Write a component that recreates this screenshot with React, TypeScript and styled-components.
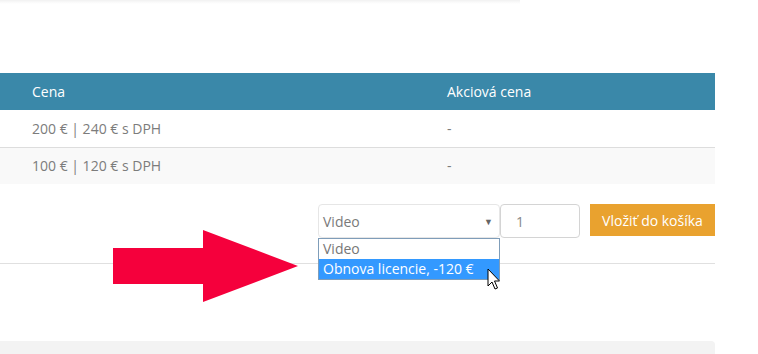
import React from "react"
import styled, { createGlobalStyle } from "styled-components"

const Global = createGlobalStyle`
  html, body {
    margin: 0;
    padding: 0;
    background: #fff;
    font-family: "Open Sans", "Liberation Sans", sans-serif;
  }
`

const Page = styled.div`
  position: relative;
  width: 758px;
  height: 354px;
  overflow: hidden;
`

const Content = styled.div`
  width: 715px;
`

const TopBand = styled.div`
  height: 73px;
  background: linear-gradient(to bottom, #f1f1f1 0, #f9f9f9 2px, #fff 4px) no-repeat;
  background-size: 520px 4px;
`

const Table = styled.table`
  width: 100%;
  border-collapse: collapse;
  table-layout: fixed;
  font-size: 14px;
`

const HeadRow = styled.tr`
  background: #3a88a9;
  color: #fff;
  height: 37px;
`

const Th = styled.th<{ $w?: number }>`
  box-sizing: border-box;
  text-align: left;
  font-weight: 400;
  padding: 0 0 0 32px;
  width: ${(p) => (p.$w ? `${p.$w}px` : "auto")};
`

const Row = styled.tr<{ $striped?: boolean }>`
  background: ${(p) => (p.$striped ? "#f9f9f9" : "#fff")};
  height: 37px;
  border-top: 1px solid #ddd;
  &:first-child {
    border-top: none;
  }
`

const Td = styled.td`
  color: #7c7c7c;
  padding: 0 0 0 32px;
`

const FormRow = styled.div`
  display: flex;
  justify-content: flex-end;
  align-items: flex-start;
  padding-top: 20px;
  padding-bottom: 25px;
  border-bottom: 1px solid #e0e0e0;
`

const SelectWrap = styled.div`
  position: relative;
`

const SelectBox = styled.div`
  box-sizing: border-box;
  width: 182px;
  height: 34px;
  border: 1px solid #e6e6e6;
  border-radius: 4px;
  display: flex;
  align-items: center;
  justify-content: space-between;
  padding: 0 6px 0 4px;
  font-size: 14px;
  color: #7a7a7a;
`

const Caret = styled.span`
  font-size: 9px;
  color: #666;
`

const Qty = styled.div`
  box-sizing: border-box;
  width: 80px;
  height: 34px;
  border: 1px solid #d4d4d4;
  border-radius: 4px;
  display: flex;
  align-items: center;
  padding-left: 15px;
  font-size: 14px;
  color: #888;
`

const CartButton = styled.button`
  box-sizing: border-box;
  margin-left: 10px;
  width: 125px;
  height: 32px;
  border: none;
  background: #e9a22f;
  color: #fff;
  font-family: "Open Sans", "Liberation Sans", sans-serif;
  font-size: 14px;
  padding: 0;
`

const DropList = styled.div`
  position: absolute;
  top: 34px;
  left: 0;
  width: 182px;
  box-sizing: border-box;
  border: 1px solid #7f9db9;
  background: #fff;
  z-index: 2;
`

const Option = styled.div<{ $active?: boolean }>`
  height: 20px;
  line-height: 20px;
  padding-left: 4px;
  font-size: 14px;
  background: ${(p) => (p.$active ? "#3399ff" : "#fff")};
  color: ${(p) => (p.$active ? "#fff" : "#777")};
  white-space: nowrap;
`

const BottomPanel = styled.div`
  margin-top: 77px;
  height: 20px;
  background: #f3f3f3;
  border-radius: 0 4px 0 0;
`

const Arrow = styled.svg`
  position: absolute;
  left: 113px;
  top: 230px;
`

const Cursor = styled.svg`
  position: absolute;
  left: 487px;
  top: 268px;
  z-index: 3;
`

export default function App() {
  return (
    <Page>
      <Global />
      <Content>
        <TopBand />
        <Table>
          <thead>
            <HeadRow>
              <Th $w={415}>Cena</Th>
              <Th>Akciová cena</Th>
            </HeadRow>
          </thead>
          <tbody>
            <Row>
              <Td>200 € | 240 € s DPH</Td>
              <Td>-</Td>
            </Row>
            <Row $striped>
              <Td>100 € | 120 € s DPH</Td>
              <Td>-</Td>
            </Row>
          </tbody>
        </Table>
        <FormRow>
          <SelectWrap>
            <SelectBox>
              <span>Video</span>
              <Caret>▼</Caret>
            </SelectBox>
            <DropList>
              <Option>Video</Option>
              <Option $active>Obnova licencie, -120 €</Option>
            </DropList>
          </SelectWrap>
          <Qty>1</Qty>
          <CartButton>Vložiť do košíka</CartButton>
        </FormRow>
        <BottomPanel />
      </Content>
      <Arrow width="186" height="74" viewBox="0 0 186 74">
        <polygon points="0,18 90,18 90,0 185,36 90,72 90,54 0,54" fill="#f5003c" />
      </Arrow>
      <Cursor width="14" height="24" viewBox="0 0 14 24">
        <path
          d="M1 1 L1 18 L5 14 L8 21 L10.5 20 L7.5 13 L12.5 13 Z"
          fill="#fff"
          stroke="#000"
          strokeWidth="1"
          strokeLinejoin="round"
        />
      </Cursor>
    </Page>
  )
}
